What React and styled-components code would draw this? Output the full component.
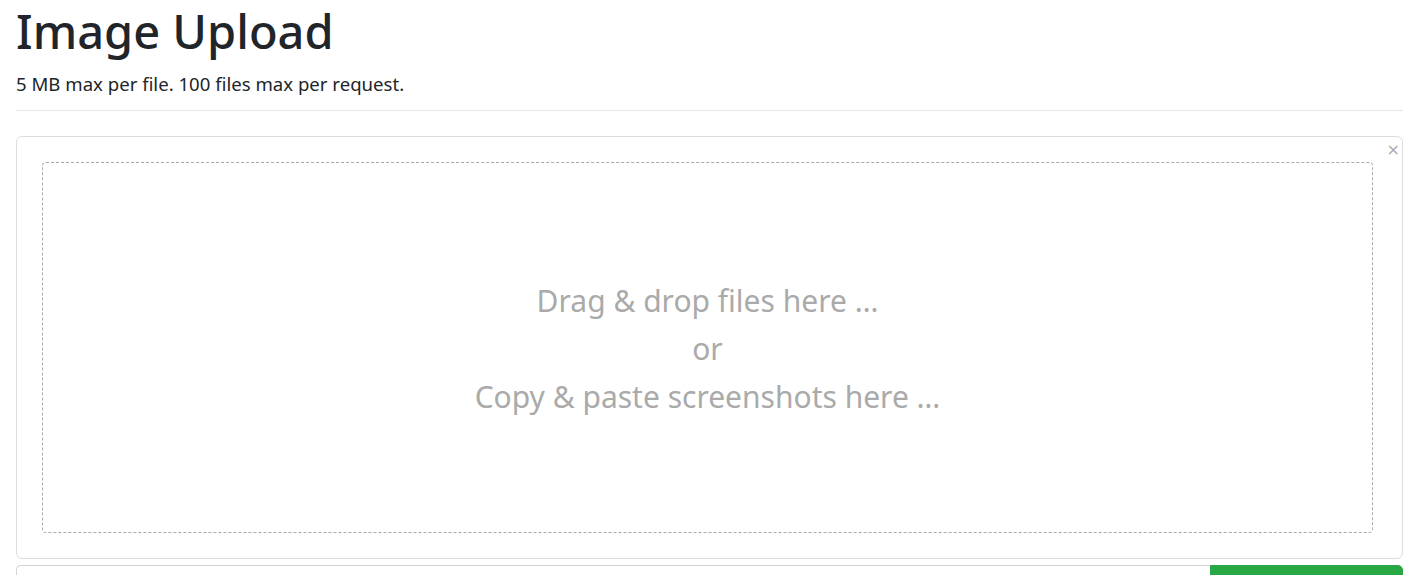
import React from "react";
import styled, { createGlobalStyle } from "styled-components";

const GlobalStyle = createGlobalStyle`
  html, body {
    margin: 0;
    padding: 0;
    background: #fff;
  }
  body {
    font-family: "Noto Sans", "Open Sans", sans-serif;
    font-size: 20px;
    line-height: 1.5;
    color: #212529;
  }
`;

const Page = styled.div`
  padding: 0 16px;
`;

const Title = styled.h1`
  margin: 0;
  font-size: 47px;
  font-weight: 500;
  line-height: 62px;
`;

const Subtitle = styled.p`
  margin: 10px 0 0;
  font-size: 18.6px;
  line-height: 24px;
`;

const Rule = styled.hr`
  margin: 14px 0 25px;
  border: 0;
  border-top: 1px solid #e6e6e6;
`;

const Preview = styled.div`
  position: relative;
  border: 1px solid #ddd;
  border-radius: 6px;
  padding: 10px;
  margin-bottom: 6px;
`;

const CloseButton = styled.button`
  position: absolute;
  top: 5px;
  right: 2px;
  border: 0;
  background: none;
  padding: 0;
  font-size: 16px;
  line-height: 16px;
  color: #aaa;
  cursor: pointer;
  font-family: "DejaVu Sans", sans-serif;
`;

const DropZone = styled.div`
  margin: 15px 19px 15px 15px;
  height: 371px;
  padding-top: 2px;
  box-sizing: border-box;
  border: 1px dashed #aaa;
  border-radius: 4px;
  display: flex;
  flex-direction: column;
  align-items: center;
  justify-content: center;
`;

const DropLine = styled.div`
  color: #aaa;
  font-size: 30px;
  line-height: 48px;
`;

const InputGroup = styled.div`
  display: flex;
  height: 48px;
`;

const Caption = styled.div`
  flex: 1;
  border: 1px solid #ced4da;
  border-right: 0;
  border-radius: 5px 0 0 5px;
`;

const BrowseButton = styled.button`
  width: 193px;
  border: 1px solid #28a745;
  background: #28a745;
  color: #fff;
  border-radius: 0 5px 5px 0;
  font-size: 20px;
  font-family: inherit;
`;

export default function App() {
  return (
    <Page>
      <GlobalStyle />
      <Title>Image Upload</Title>
      <Subtitle>5 MB max per file. 100 files max per request.</Subtitle>
      <Rule />
      <Preview>
        <CloseButton aria-label="Close">×</CloseButton>
        <DropZone>
          <DropLine>Drag &amp; drop files here …</DropLine>
          <DropLine>or</DropLine>
          <DropLine>Copy &amp; paste screenshots here …</DropLine>
        </DropZone>
      </Preview>
      <InputGroup>
        <Caption />
        <BrowseButton>Browse …</BrowseButton>
      </InputGroup>
    </Page>
  );
}
